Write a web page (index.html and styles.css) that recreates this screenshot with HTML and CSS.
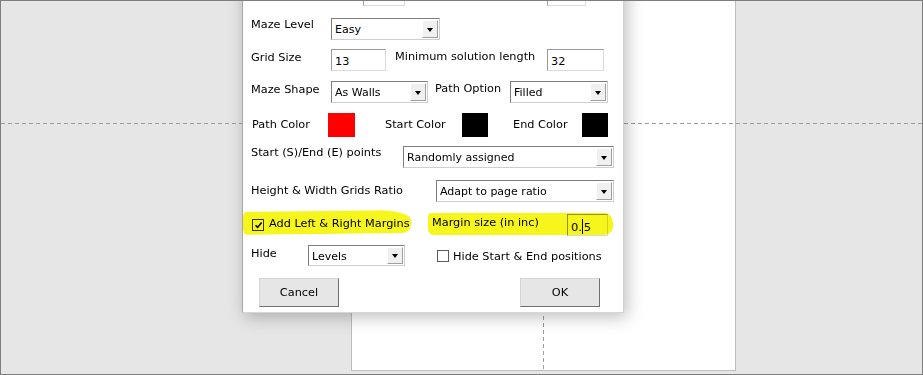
FILE: index.html
```html
<!DOCTYPE html>
<html>
<head>
<meta charset="utf-8">
<link rel="stylesheet" href="styles.css">
</head>
<body>
<div class="frame">
  <div class="page"></div>
  <div class="dialog">
    <div class="row r0">
      <div></div>
      <div class="inp"></div>
      <div></div>
      <div class="inp"></div>
    </div>
    <div class="row r1">
      <div class="lbl up4">Maze Level</div>
      <div class="sel"><span>Easy</span><i class="dd"></i></div>
    </div>
    <div class="row r2">
      <div class="lbl up2">Grid Size</div>
      <div class="inp w55">13</div>
      <div class="lbl up3">Minimum solution length</div>
      <div class="inp">32</div>
    </div>
    <div class="row r3">
      <div class="lbl up2">Maze Shape</div>
      <div class="sel w97"><span>As Walls</span><i class="dd"></i></div>
      <div class="lbl up3">Path Option</div>
      <div class="sel"><span>Filled</span><i class="dd"></i></div>
    </div>
    <div class="row r4">
      <div class="lbl pl1">Path Color</div>
      <div class="sw red"></div>
      <div class="lbl">Start Color</div>
      <div class="sw"></div>
      <div class="lbl">End Color</div>
      <div class="sw"></div>
    </div>
    <div class="row r5">
      <div class="lbl up4">Start (S)/End (E) points</div>
      <div class="sel"><span>Randomly assigned</span><i class="dd"></i></div>
    </div>
    <div class="row r6">
      <div class="lbl">Height &amp; Width Grids Ratio</div>
      <div class="sel"><span>Adapt to page ratio</span><i class="dd"></i></div>
    </div>
    <div class="row r7">
      <div class="hl hl-left"></div>
      <div class="hl hl-right"></div>
      <div class="cb on"><svg viewBox="0 0 9 9" width="9" height="9"><path d="M1.5 4.2 L3.6 6.4 L7.6 1.6" fill="none" stroke="#000" stroke-width="1.6"/></svg></div>
      <div class="lbl up1">Add Left &amp; Right Margins</div>
      <div class="lbl up2">Margin size (in inc)</div>
      <div class="inp">0.<span class="caret"></span>5</div>
    </div>
    <div class="row r8">
      <div class="lbl up2">Hide</div>
      <div class="sel w97 h21"><span>Levels</span><i class="dd"></i></div>
      <div class="cb"></div>
      <div class="lbl dn1">Hide Start &amp; End positions</div>
    </div>
    <div class="row r9">
      <div></div>
      <div class="btn">Cancel</div>
      <div class="btn">OK</div>
    </div>
  </div>
</div>
</body>
</html>
```

FILE: styles.css
```css
html, body {
  margin: 0;
  padding: 0;
  background: #e6e6e6;
}

.frame {
  position: relative;
  width: 923px;
  height: 375px;
  box-sizing: border-box;
  border: 1px solid #7d7d7d;
  background: #e6e6e6;
  overflow: hidden;
  font-family: "DejaVu Sans", Verdana, sans-serif;
  font-size: 11.3px;
  color: #000;
}

.frame::before {
  content: "";
  position: absolute;
  left: 0;
  right: 0;
  top: 122px;
  height: 1px;
  background: repeating-linear-gradient(to right, #9d9d9d 0 4px, transparent 4px 7px);
  z-index: 2;
}

.page {
  position: relative;
  margin-left: 350px;
  width: 385px;
  height: 370px;
  box-sizing: border-box;
  background: #fff;
  border: 1px solid #bdbdbd;
  border-top: none;
}

.page::after {
  content: "";
  position: absolute;
  left: 191px;
  top: 0;
  bottom: 0;
  width: 1px;
  background: repeating-linear-gradient(to bottom, #9d9d9d 0 4px, transparent 4px 7px);
}

.dialog {
  position: absolute;
  left: 241px;
  top: -17px;
  width: 382px;
  box-sizing: border-box;
  background: #fff;
  border-left: 1px solid #a8a8a8;
  border-right: 1px solid #d0d0d0;
  border-bottom: 1px solid #d6d6d6;
  padding-bottom: 5px;
  box-shadow: 3px 4px 16px rgba(0, 0, 0, 0.26);
  z-index: 3;
}

.row {
  position: relative;
  display: grid;
  align-items: center;
  padding-left: 8px;
  height: 22px;
}

.r0 { grid-template-columns: 112px 42px 142px 39px; }
.r1 { margin-top: 12px; grid-template-columns: 80px 109px; }
.r2 { margin-top: 9px; grid-template-columns: 80px 64px 152px 57px; }
.r3 { margin-top: 10px; grid-template-columns: 80px 104px 75px 98px; }
.r4 { margin-top: 10px; height: 24px; grid-template-columns: 77px 57px 77px 51px 69px 26px; }
.r5 { margin-top: 9px; grid-template-columns: 152px 211px; }
.r6 { margin-top: 12px; grid-template-columns: 185px 178px; }
.r7 { margin-top: 12px; grid-template-columns: 18px 163px 135px 41px; }
.r8 { margin-top: 9px; height: 21px; grid-template-columns: 57px 129px 16px auto; }
.r9 { margin-top: 12px; height: 29px; grid-template-columns: 8px 261px 80px; }

.lbl {
  white-space: nowrap;
  line-height: 14px;
  position: relative;
  z-index: 1;
}

.up1 { margin-bottom: 2px; }
.up2 { margin-bottom: 4px; }
.up3 { margin-bottom: 6px; }
.up4 { margin-bottom: 8px; }
.dn1 { margin-top: 2px; }

.pl1 { padding-left: 1px; }

.inp {
  height: 22px;
  box-sizing: border-box;
  border: 1px solid;
  border-color: #9a9a9a #dadada #dadada #9a9a9a;
  background: #fff;
  padding: 4px 0 0 3px;
  line-height: 15px;
  white-space: nowrap;
}

.w55 { width: 55px; }
.w97 { width: 97px; }

.caret {
  display: inline-block;
  width: 1px;
  height: 15px;
  background: #000;
  vertical-align: -3px;
  margin: 0 1px 0 0;
}

.sel {
  display: flex;
  align-items: stretch;
  height: 22px;
  box-sizing: border-box;
  border: 1px solid;
  border-color: #7e7e7e #cfcfcf #cfcfcf #7e7e7e;
  background: #fff;
}

.sel.h21 { height: 21px; }

.sel span {
  flex: 1;
  padding: 4px 0 0 3px;
  line-height: 14px;
  font-size: 11px;
  white-space: nowrap;
  overflow: hidden;
}

.dd {
  width: 16px;
  margin: 1px;
  box-sizing: border-box;
  background: #f0f0f0;
  border: 1px solid;
  border-color: #ffffff #a0a0a0 #a0a0a0 #ffffff;
  display: flex;
  align-items: center;
  justify-content: center;
}

.dd::before {
  content: "";
  width: 0;
  height: 0;
  border-left: 3.5px solid transparent;
  border-right: 3.5px solid transparent;
  border-top: 4px solid #000;
  margin-top: 1px;
}

.sw {
  width: 26px;
  height: 24px;
  background: #000;
}

.sw.red {
  width: 27px;
  background: #ff0000;
}

.cb {
  width: 12px;
  height: 12px;
  box-sizing: border-box;
  border: 1px solid #5a5a5a;
  background: #fff;
  display: flex;
  align-items: center;
  justify-content: center;
  position: relative;
  z-index: 1;
}

.cb.on {
  margin-left: 1px;
  border-color: #333;
  background: transparent;
}

.hl {
  position: absolute;
  background: #f6f61c;
  mix-blend-mode: multiply;
  z-index: 4;
}

.hl-left {
  left: 0;
  top: -3px;
  width: 168px;
  height: 23px;
  border-radius: 3px 30px 10px 4px / 6px 10px 8px 6px;
  transform: rotate(-0.6deg);
}

.hl-right {
  left: 185px;
  top: -1px;
  width: 185px;
  height: 22px;
  border-radius: 4px 8px 10px 6px / 4px 10px 8px 6px;
}

.btn {
  width: 80px;
  height: 29px;
  box-sizing: border-box;
  background: #e6e6e6;
  border: 1px solid;
  border-color: #d4d4d4 #6f6f6f #6f6f6f #d4d4d4;
  display: flex;
  align-items: center;
  justify-content: center;
}
```
